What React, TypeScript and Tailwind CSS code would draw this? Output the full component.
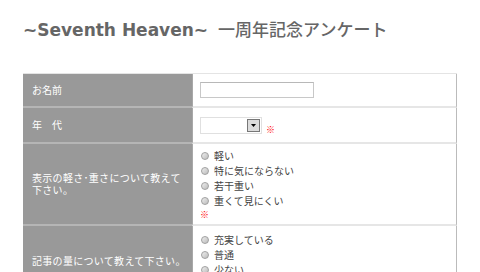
const jp = "font-['Noto_Sans_CJK_JP',sans-serif]";

function Radio({ label }: { label: string }) {
  return (
    <div className="flex items-center h-[15px]">
      <span className="w-[8px] h-[8px] rounded-full border border-[#a0a0a0] bg-gradient-to-br from-[#eeeeee] to-[#bcbcbc] mr-[5px] ml-[1px]"></span>
      <span className="text-[10px] leading-none text-[#444]">{label}</span>
    </div>
  );
}

function Req() {
  return <span className="text-[9px] leading-none text-[#ff0000] font-bold">※</span>;
}

function Row({
  label,
  height,
  children,
  last,
}: {
  label: React.ReactNode;
  height: string;
  children: React.ReactNode;
  last?: boolean;
}) {
  return (
    <div className={`flex ${height}`}>
      <div
        className={`w-[169px] shrink-0 bg-[#999999] flex items-center pl-[9px] text-white text-[10px] leading-[12px] ${last ? "" : "border-b-2 border-[#b5b5b5]"}`}
      >
        <div>{label}</div>
      </div>
      <div
        className={`w-[265px] shrink-0 bg-white border-l border-[#a8a8a8] border-r border-r-[#bbbbbb] flex flex-col justify-center pl-[7px] ${last ? "" : "border-b-2 border-b-[#e6e6e6]"}`}
      >
        {children}
      </div>
    </div>
  );
}

export default function App() {
  return (
    <div className={`w-[480px] h-[272px] overflow-hidden bg-white ${jp}`}>
      <h1 className="pl-[23px] pt-[18px] h-[73px] text-[17px] leading-[21px] text-[#666666] whitespace-nowrap">
        <span className="font-bold font-['DejaVu_Sans',sans-serif]">~Seventh Heaven~</span>
        <span className={`${jp} font-medium ml-[10px]`}>一周年記念アンケート</span>
      </h1>

      <div className="ml-[23px] w-[434px] border-t border-[#e4e4e4]">
        <Row label="お名前" height="h-[34px]">
          <div className="w-[114px] h-[16px] border border-[#c8c8c8] border-t-[#b8b8b8]"></div>
        </Row>

        <Row label="年　代" height="h-[36px]">
          <div className="flex items-center">
            <div className="w-[62px] h-[17px] border border-[#e0e0e0] bg-white flex justify-end items-center pr-[1px]">
              <div className="w-[13px] h-[13px] border border-[#777] bg-[#dcdcdc] flex items-center justify-center">
                <svg width="5" height="3" viewBox="0 0 5 3">
                  <path d="M0 0h5L2.5 3z" fill="#000" />
                </svg>
              </div>
            </div>
            <span className="ml-[4px] mt-[1px]">
              <Req />
            </span>
          </div>
        </Row>

        <Row
          label={
            <div className="tracking-[0.3px] whitespace-nowrap">
              表示の軽さ･重さについて教えて
              <br />
              下さい。
            </div>
          }
          height="h-[82px]"
        >
          <div className="flex flex-col">
            <Radio label="軽い" />
            <Radio label="特に気にならない" />
            <Radio label="若干重い" />
            <Radio label="重くて見にくい" />
            <div className="h-[12px] flex items-center">
              <Req />
            </div>
          </div>
        </Row>

        <Row
          label={<div className="tracking-[0.3px] whitespace-nowrap">記事の量について教えて下さい。</div>}
          height="h-[70px]"
          last
        >
          <div className="flex flex-col">
            <Radio label="充実している" />
            <Radio label="普通" />
            <Radio label="少ない" />
            <div className="h-[12px] flex items-center">
              <Req />
            </div>
          </div>
        </Row>
      </div>
    </div>
  );
}
